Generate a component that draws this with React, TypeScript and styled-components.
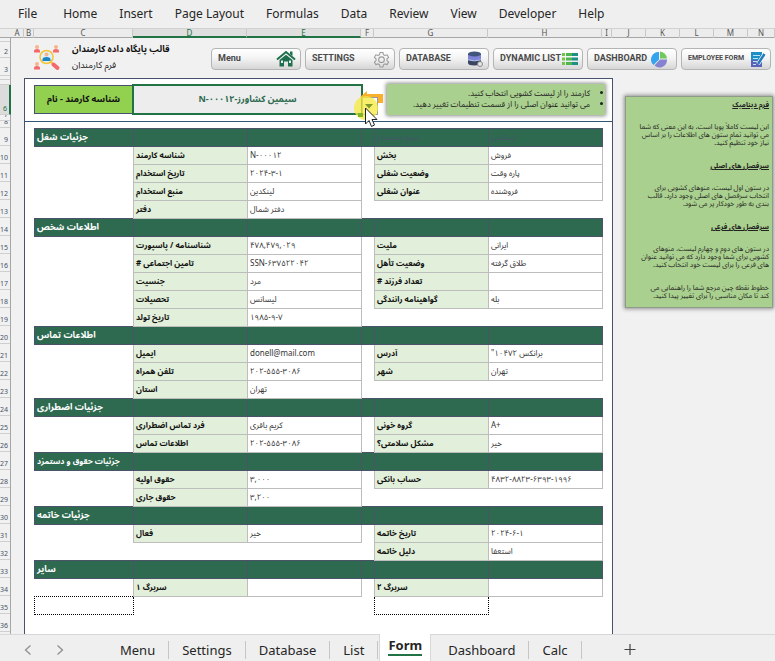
import React from "react";
import styled, { createGlobalStyle, css } from "styled-components";

const GREEN = "#2d6a4f";
const NAVY = "#46526f";
const GRID = "#bdbdbd";
const PERSIAN = '"Noto Sans", "Noto Sans Arabic", "DejaVu Sans", sans-serif';

const Global = createGlobalStyle`
  * { box-sizing: border-box; }
  body { margin: 0; background: #f1f1f1; font-family: "Noto Sans", "DejaVu Sans", sans-serif; color: #262626; }
  button, select { font: inherit; color: inherit; margin: 0; }
`;

const Workbook = styled.div`
  display: flex;
  flex-direction: column;
  height: 100vh;
  overflow: hidden;
`;

/* ---------- menu bar ---------- */
const MenuBar = styled.nav`
  display: flex;
  flex: none;
  height: 28px;
  padding-left: 18px;
  gap: 22px;
  align-items: center;
  background: #efefef;
`;
const MenuItem = styled.button<{ $first?: boolean }>`
  border: 0;
  background: none;
  padding: 0;
  font-size: 12px;
  line-height: 18px;
  white-space: nowrap;
  margin-right: ${(p) => (p.$first ? "4px" : "0")};
`;

/* ---------- sheet frame ---------- */
const HeadRow = styled.div`
  display: grid;
  grid-template-columns: 11px 13fr 10fr 99fr 114fr 114fr 13fr 114fr 114fr 10fr 34fr 34fr 34fr 34fr 27fr;
  flex: none;
  height: 10px;
  background: #ececec;
  border-top: 1px solid #d2d2d2;
  border-bottom: 1px solid #a6a6a6;
`;
const ColHead = styled.div<{ $on?: boolean }>`
  min-width: 0;
  height: 9px;
  border-right: 1px solid #c8c8c8;
  font-size: 8px;
  line-height: 8px;
  text-align: center;
  color: ${(p) => (p.$on ? "#217346" : "#555")};
  ${(p) =>
    p.$on &&
    css`
      background: #dfdfdf;
      border-bottom: 2px solid #217346;
    `}
`;
const Sheet = styled.div`
  display: flex;
  flex: 1;
  min-height: 0;
  overflow: hidden;
`;
const Gutter = styled.div`
  flex: none;
  width: 11px;
  background: #f1f1f1;
  border-right: 1px solid #a6a6a6;
`;
const RowHead = styled.div<{ $h: number; $on?: boolean }>`
  display: flex;
  align-items: flex-end;
  justify-content: flex-end;
  height: ${(p) => p.$h}px;
  overflow: hidden;
  padding-right: 2px;
  border-bottom: 1px solid #cfcfcf;
  font-size: 7px;
  line-height: 10px;
  color: #44546a;
  ${(p) =>
    p.$on &&
    css`
      background: #dcdcdc;
      border-right: 2px solid #217346;
      margin-right: -1px;
      color: #217346;
    `}
`;
const Canvas = styled.div`
  flex: 1;
  min-width: 0;
  display: flex;
  flex-direction: column;
`;

/* ---------- heading ---------- */
const Heading = styled.header`
  display: flex;
  flex: none;
  height: 40px;
  padding: 6px 4px 0 22px;
  align-items: flex-start;
`;
const Titles = styled.div`
  flex: 1;
  padding-left: 11px;
  color: #111;
  font-family: ${PERSIAN};
`;
const Title = styled.h1`
  margin: 0;
  font-size: 9px;
  line-height: 10px;
  white-space: nowrap;
  width: max-content;
`;
const Subtitle = styled.p`
  margin: 6px 0 0;
  font-size: 9px;
  line-height: 10px;
  white-space: nowrap;
  width: max-content;
`;
const Shortcuts = styled.div`
  display: flex;
  gap: 4px;
  padding-top: 4px;
`;
const Shortcut = styled.button<{ $small?: boolean }>`
  display: flex;
  width: 90px;
  height: 22px;
  padding: 0 4px 0 6px;
  align-items: center;
  justify-content: space-between;
  border: 1px solid #b4b4b4;
  border-radius: 4px;
  background: linear-gradient(#fff, #f4f4f4 45%, #d6d6d6);
  font-family: Roboto, "Liberation Sans", sans-serif;
  font-weight: 700;
  font-size: ${(p) => (p.$small ? "7px" : "9px")};
  color: #4a4a4a;
  white-space: nowrap;
  svg { flex: none; }
  span { padding-bottom: 2px; }
`;

/* ---------- form panel ---------- */
const Columns = styled.div`
  display: grid;
  flex: 1;
  grid-template-columns: minmax(0, 589fr) minmax(0, 162fr);
  min-height: 0;
  padding-left: 13px;
`;
const Panel = styled.main`
  background: #fff;
  border: 1px solid ${NAVY};
  border-bottom: 0;
  min-height: 0;
`;
const PickRow = styled.div`
  display: grid;
  grid-template-columns: 98fr 231fr 24fr 218fr;
  height: 43px;
  padding: 5px 7px 6px 9px;
  border-bottom: 1px solid #2f5577;
`;
const PickLabel = styled.label`
  display: flex;
  align-items: center;
  justify-content: center;
  margin: 1px 0;
  padding-bottom: 2px;
  background: #92d050;
  border: 1px solid ${NAVY};
  border-right: 0;
  font: 700 9px/14px ${PERSIAN};
  color: #111;
`;
const PickCell = styled.div`
  position: relative;
  border: 2px solid #217346;
  background: #ededed;
`;
const Picker = styled.select`
  appearance: none;
  display: block;
  width: 100%;
  height: 100%;
  border: 0;
  padding: 0 0 2px;
  outline: 0;
  background: transparent;
  text-align: center;
  text-align-last: center;
  font: 700 9px/14px ${PERSIAN};
  color: ${GREEN};
`;
const Pointer = styled.svg`
  position: absolute;
  right: -24px;
  top: 2px;
  pointer-events: none;
`;
const Tips = styled.ul`
  grid-column: 4;
  margin: 0;
  padding: 3px 15px 0 0;
  background: #a9d08e;
  box-shadow: 0 0 4px 1px #8c8c8c;
  font: 8px/11px ${PERSIAN};
  color: #222;
  white-space: nowrap;
`;

const FormWrap = styled.div`
  padding: 6px 9px 0;
`;
const Table = styled.table`
  width: 100%;
  table-layout: fixed;
  border-collapse: collapse;
  font-family: ${PERSIAN};
  tr { height: 18px; }
  td, th {
    height: 18px;
    padding: 0 2px 2px;
    overflow: hidden;
    text-align: left;
    white-space: nowrap;
    font-size: 8px;
    line-height: 14px;
  }
`;
const SectionCell = styled.th<{ $small?: boolean }>`
  && {
    background: ${GREEN};
    border: 1px solid #4b5369;
    color: #fff;
    overflow: visible;
    font-size: ${(p) => (p.$small ? "8px" : "9px")};
  }
`;
const GhostCell = styled(SectionCell)`
  && {
    color: #46566a;
    font-size: 8px;
    font-weight: 400;
  }
`;
const LabelCell = styled.th`
  background: #e2efda;
  border: 1px solid ${GRID};
  font-weight: 700;
  color: #111;
`;
const ValueCell = styled.td`
  border: 1px solid ${GRID};
  color: #333;
`;
const BlankCell = styled.td<{ $edge?: boolean }>`
  border-left: ${(p) => (p.$edge ? `1px solid ${GRID}` : "0")};
`;
const DottedCell = styled.td`
  border: 1px dotted #000;
`;

/* ---------- side note ---------- */
const Aside = styled.aside`
  padding: 18px 2px 0 12px;
`;
const Note = styled.div`
  background: #a9d08e;
  border: 1px solid #8f9b88;
  box-shadow: 0 0 4px 1px #909090;
  padding: 4px 3px 7px;
  font: 7px/8px ${PERSIAN};
  color: #222;
  white-space: nowrap;
  h2 { margin: 0; font-size: 7px; line-height: 8px; text-decoration: underline; }
  p { margin: 14px 0 15px; line-height: 8px; }
  p:last-child { margin-bottom: 0; }
`;

/* ---------- sheet tabs ---------- */
const TabBar = styled.nav`
  display: flex;
  flex: none;
  height: 27px;
  align-items: flex-start;
  background: #efefef;
  border-top: 1px solid #d8d8d8;
`;
const Arrows = styled.div`
  display: flex;
  gap: 20px;
  padding: 8px 41px 0 22px;
`;
const IconButton = styled.button`
  display: flex;
  border: 0;
  padding: 0;
  background: none;
`;
const Tab = styled.button`
  position: relative;
  border: 0;
  background: none;
  padding: 6px 14px 0 13px;
  font-size: 13px;
  line-height: 18px;
  &::after {
    content: "";
    position: absolute;
    right: 0;
    top: 6px;
    height: 18px;
    border-right: 1px solid #c6c6c6;
  }
`;
const ActiveTab = styled.button`
  align-self: stretch;
  margin: -1px 4px 0 1px;
  padding: 0 8px 2px;
  border: 1px solid #d8d8d8;
  border-top: 0;
  border-bottom: 0;
  background: #fff;
  font-weight: 700;
  font-size: 13px;
  line-height: 17px;
  span { display: block; border-bottom: 2px solid #217346; }
`;
const AddButton = styled(IconButton)`
  padding: 8px 0 0 41px;
`;

/* ---------- icons ---------- */
const Person = ({ x, y }: { x: number; y: number }) => (
  <g transform={`translate(${x} ${y})`}>
    <circle cx="3" cy="2" r="2" fill="#f6b58b" />
    <path d="M0 7.500V6Q0 4 3 4Q6 4 6 6V7.500Z" fill="#f4696b" />
  </g>
);
const Logo = () => (
  <svg width="28" height="28" viewBox="0 0 28 28" aria-hidden="true">
    <Person x={1} y={1} />
    <Person x={20} y={1} />
    <Person x={1} y={18} />
    <path d="M18 18L20 20" stroke="#f7c331" strokeWidth="2" />
    <path d="M20.500 20.500L24.500 24" stroke="#f4696b" strokeWidth="4" strokeLinecap="round" />
    <circle cx="13.500" cy="13" r="6.500" fill="#dff1fb" stroke="#f7c331" strokeWidth="1.500" />
    <circle cx="13.500" cy="10.500" r="2" fill="#f6b58b" />
    <path d="M9.500 17V15Q10 13 13.500 13Q17 13 17.500 15V17Z" fill="#1b86c4" />
  </svg>
);
const HomeIcon = () => (
  <svg width="20" height="18" viewBox="0 0 20 18" aria-hidden="true">
    <path d="M1 9.500L10 2L19 9.500" fill="none" stroke="#1f6e4d" strokeWidth="2" />
    <path d="M14 1.500H16.500V6L14 4Z" fill="#1f6e4d" />
    <path d="M3.500 10L10 4.800L16.500 10V16.500H12V11.500H8V16.500H3.500Z" fill="#1f6e4d" />
    <path d="M5 10.500H7V13H5ZM13 10.500H15V13H13Z" fill="#e8f2ec" />
  </svg>
);
const GearIcon = () => (
  <svg width="17" height="17" viewBox="0 0 24 24" fill="none" stroke="#9a9a9a" strokeWidth="1.500" aria-hidden="true">
    <path d="M10 2h4l.7 3.100 2.300 1.300 3-1 2 3.500-2.300 2.100v2.600l2.300 2.100-2 3.500-3-1-2.300 1.300L14 22.600h-4l-.7-3.100L7 18.200l-3 1-2-3.500 2.300-2.100v-2.600L2 8.900l2-3.500 3 1 2.300-1.300z" />
    <circle cx="12" cy="12.300" r="4" />
  </svg>
);
const DatabaseIcon = () => (
  <svg width="18" height="18" viewBox="0 0 18 18" aria-hidden="true">
    <path d="M2 4V13Q2 15.500 8.500 15.500Q15 15.500 15 13V4Z" fill="#3a4560" />
    <path d="M2 5V9.500Q8 12 15 9.500V5Z" fill="#7f83d8" />
    <ellipse cx="8.500" cy="4" rx="6.500" ry="2.500" fill="#3f557c" />
    <path d="M2 9.800Q8 12 15 9.800" stroke="#b8c8f0" fill="none" />
    <circle cx="14" cy="14" r="2.500" fill="#e4e4e4" stroke="#777" strokeWidth=".8" />
  </svg>
);
const ListIcon = () => (
  <svg width="16" height="14" viewBox="0 0 16 14" aria-hidden="true">
    <path d="M0 1H3V4H0ZM0 5.500H3V8.500H0ZM0 10H3V13H0Z" fill="#72c443" />
    <path d="M4 1H10V4H4ZM4 5.500H10V8.500H4ZM4 10H10V13H4Z" fill="#4fb552" />
    <path d="M10 1H16V4H10ZM10 5.500H16V8.500H10ZM10 10H16V13H10Z" fill="#1d8f86" />
  </svg>
);
const PieIcon = () => (
  <svg width="21" height="17" viewBox="0 0 21 17" aria-hidden="true">
    <path d="M8 8.500L2.500 14A7.500 7.500 0 0 1 8 1Z" fill="#35a4ee" />
    <path d="M9 7.500V.5A7.500 7.500 0 0 1 16 7.500Z" fill="#72c858" />
    <path d="M9 8.500H16A7.500 7.500 0 0 1 3.500 14.500Z" fill="#8583d1" />
  </svg>
);
const FormIcon = () => (
  <svg width="16" height="17" viewBox="0 0 16 17" aria-hidden="true">
    <path d="M1 1H12V16H1Z" fill="#1d8fc4" />
    <path d="M1 9H12V16H1Z" fill="#5b63b8" />
    <path d="M3 4.500H10M3 7.500H8M3 10.500H7M3 13.500H6" stroke="#b9e2f6" />
    <path d="M14.500 3L8 13" stroke="#fff" strokeWidth="4" />
    <path d="M14.500 3L8 13" stroke="#2579bd" strokeWidth="2.500" />
  </svg>
);
const Chevron = ({ flip }: { flip?: boolean }) => (
  <svg width="12" height="14" viewBox="0 0 12 14" fill="none" stroke="#909090" strokeWidth="1.300" aria-hidden="true">
    <path d={flip ? "M3.500 2.500L8.500 7L3.500 11.500" : "M8.500 2.500L3.500 7L8.500 11.500"} />
  </svg>
);

/* ---------- data ---------- */
const menu = ["File", "Home", "Insert", "Page Layout", "Formulas", "Data", "Review", "View", "Developer", "Help"];
const columnNames = "ABCDEFGHIJKLMN".split("");
const topRows = [4, 16, 18, 4, 5, 30, 6, 7];
const rowHeights = [...topRows, ...Array<number>(28).fill(18)];

type Pair = [string, string] | null;
type Section = { title: string; small?: boolean; ghost?: [string, string]; rows: [Pair, Pair][] };
const sections: Section[] = [
  {
    title: "جزئیات شغل",
    ghost: ["منبع استخدام", "لینکدین"],
    rows: [
      [["شناسه کارمند", "N-۰۰۰۱۲"], ["بخش", "فروش"]],
      [["تاریخ استخدام", "۲۰۲۴-۳-۱"], ["وضعیت شغلی", "پاره وقت"]],
      [["منبع استخدام", "لینکدین"], ["عنوان شغلی", "فروشنده"]],
      [["دفتر", "دفتر شمال"], null],
    ],
  },
  {
    title: "اطلاعات شخص",
    rows: [
      [["شناسنامه / پاسپورت", "۴۷۸,۴۷۹,۰۲۹"], ["ملیت", "ایرانی"]],
      [["تامین اجتماعی #", "SSN-۶۳۷۵۲۲۰۴۲"], ["وضعیت تأهل", "طلاق گرفته"]],
      [["جنسیت", "مرد"], ["تعداد فرزند #", ""]],
      [["تحصیلات", "لیسانس"], ["گواهینامه رانندگی", "بله"]],
      [["تاریخ تولد", "۱۹۸۵-۹-۷"], null],
    ],
  },
  {
    title: "اطلاعات تماس",
    rows: [
      [["ایمیل", "donell@mail.com"], ["آدرس", "برانکس ۱۰۴۷۲\""]],
      [["تلفن همراه", "۲۰۲-۵۵۵-۳۰۸۶"], ["شهر", "تهران"]],
      [["استان", "تهران"], null],
    ],
  },
  {
    title: "جزئیات اضطراری",
    rows: [
      [["فرد تماس اضطراری", "کریم باقری"], ["گروه خونی", "A+"]],
      [["اطلاعات تماس", "۲۰۲-۵۵۵-۳۰۸۶"], ["مشکل سلامتی؟", "خیر"]],
    ],
  },
  {
    title: "جزئیات حقوق و دستمزد",
    small: true,
    rows: [
      [["حقوق اولیه", "۳,۰۰۰"], ["حساب بانکی", "۴۸۳۲-۸۸۲۳-۶۳۹۳-۱۹۹۶"]],
      [["حقوق جاری", "۳,۲۰۰"], null],
    ],
  },
  {
    title: "جزئیات خاتمه",
    rows: [
      [["فعال", "خیر"], ["تاریخ خاتمه", "۲۰۲۴-۶-۱"]],
      [null, ["دلیل خاتمه", "استعفا"]],
    ],
  },
  { title: "سایر", rows: [[["سربرگ ۱", ""], ["سربرگ ۲", ""]]] },
];

const dirOf = (text: string) => (/[\u0621-\u06cc]/.test(text) ? "rtl" : "ltr");

const PairCells = ({ pair }: { pair: Pair }) =>
  pair ? (
    <>
      <LabelCell scope="row" dir="rtl">{pair[0]}</LabelCell>
      <ValueCell dir={dirOf(pair[1])}>{pair[1]}</ValueCell>
    </>
  ) : (
    <BlankCell colSpan={2} />
  );

const FormTable = () => (
  <Table>
    <colgroup>
      {[99, 114, 114, 13, 114, 114].map((w, i) => (
        <col key={i} style={{ width: `${(w / 568) * 100}%` }} />
      ))}
    </colgroup>
    {sections.map((s) => (
      <tbody key={s.title}>
        <tr>
          <SectionCell $small={s.small} scope="rowgroup" dir="rtl">{s.title}</SectionCell>
          <SectionCell as="td" />
          <SectionCell as="td" />
          <SectionCell as="td" />
          <GhostCell as="td" dir="rtl">{s.ghost?.[0]}</GhostCell>
          <GhostCell as="td" dir="rtl">{s.ghost?.[1]}</GhostCell>
        </tr>
        {s.rows.map(([a, b], i) => (
          <tr key={i}>
            <BlankCell />
            <PairCells pair={a} />
            <BlankCell $edge={!!a} />
            <PairCells pair={b} />
          </tr>
        ))}
      </tbody>
    ))}
    <tbody>
      <tr>
        <DottedCell />
        <BlankCell colSpan={3} />
        <DottedCell />
        <BlankCell />
      </tr>
    </tbody>
  </Table>
);

export default function App() {
  return (
    <Workbook>
      <Global />
      <MenuBar>
        {menu.map((m, i) => (
          <MenuItem key={m} $first={i === 0}>{m}</MenuItem>
        ))}
      </MenuBar>
      <HeadRow>
        <div />
        {columnNames.map((c) => (
          <ColHead key={c} $on={c === "D" || c === "E"}>{c}</ColHead>
        ))}
      </HeadRow>
      <Sheet>
        <Gutter>
          {rowHeights.map((h, i) => (
            <RowHead key={i} $h={h} $on={i === 5}>{i === 4 ? "" : i + 1}</RowHead>
          ))}
        </Gutter>
        <Canvas>
          <Heading>
            <Logo />
            <Titles>
              <Title dir="rtl">قالب پایگاه داده کارمندان</Title>
              <Subtitle dir="rtl">فرم کارمندان</Subtitle>
            </Titles>
            <Shortcuts>
              <Shortcut><span>Menu</span><HomeIcon /></Shortcut>
              <Shortcut><span>SETTINGS</span><GearIcon /></Shortcut>
              <Shortcut><span>DATABASE</span><DatabaseIcon /></Shortcut>
              <Shortcut><span>DYNAMIC LIST</span><ListIcon /></Shortcut>
              <Shortcut><span>DASHBOARD</span><PieIcon /></Shortcut>
              <Shortcut $small><span>EMPLOYEE FORM</span><FormIcon /></Shortcut>
            </Shortcuts>
          </Heading>
          <Columns>
            <Panel>
              <PickRow>
                <PickLabel htmlFor="employee" dir="rtl">شناسه کارمند - نام</PickLabel>
                <PickCell>
                  <Picker id="employee" dir="rtl">
                    <option>سیمین کشاورز-N-۰۰۰۱۲</option>
                  </Picker>
                  <Pointer width="32" height="42" viewBox="0 0 32 42" aria-hidden="true">
                    <path d="M7 9L14 3V6H30V15H14V14Z" fill="#fbb02d" />
                    <rect x="9.500" y="9.500" width="15" height="17" fill="#fff" stroke="#9a9a9a" />
                    <circle cx="13" cy="20" r="12" fill="#f6ea3c" fillOpacity=".75" />
                    <rect x="5" y="25" width="5" height="4" fill="#7fb52c" />
                    <path d="M12 16H20L16 20.500Z" fill="#7e9a2a" />
                    <path d="M12.500 20V36L16 32.500L18.500 38.500L21.500 37L19 31.500H24Z" fill="#fff" stroke="#222" />
                  </Pointer>
                </PickCell>
                <Tips dir="rtl">
                  <li>کارمند را از لیست کشویی انتخاب کنید.</li>
                  <li>می توانید عنوان اصلی را از قسمت تنظیمات تغییر دهید.</li>
                </Tips>
              </PickRow>
              <FormWrap>
                <FormTable />
              </FormWrap>
            </Panel>
            <Aside>
              <Note dir="rtl">
                <h2>فرم دینامیک</h2>
                <p>
                  این لیست کاملاً پویا است، به این معنی که شما<br />
                  می توانید تمام ستون های اطلاعات را بر اساس<br />
                  نیاز خود تنظیم کنید.
                </p>
                <h2>سرفصل های اصلی</h2>
                <p>
                  در ستون اول لیست، منوهای کشویی برای<br />
                  انتخاب سرفصل های اصلی وجود دارد. قالب<br />
                  بندی به طور خودکار پر می شود.
                </p>
                <h2>سرفصل های فرعی</h2>
                <p>
                  در ستون های دوم و چهارم لیست، منوهای<br />
                  کشویی برای شما وجود دارد که می توانید عنوان<br />
                  های فرعی را برای لیست خود انتخاب کنید.
                </p>
                <p>
                  خطوط نقطه چین مرجع شما را راهنمایی می<br />
                  کند تا مکان مناسبی را برای تغییر پیدا کنید.
                </p>
              </Note>
            </Aside>
          </Columns>
        </Canvas>
      </Sheet>
      <TabBar>
        <Arrows>
          <IconButton aria-label="Previous sheet"><Chevron /></IconButton>
          <IconButton aria-label="Next sheet"><Chevron flip /></IconButton>
        </Arrows>
        {["Menu", "Settings", "Database", "List"].map((t) => <Tab key={t}>{t}</Tab>)}
        <ActiveTab><span>Form</span></ActiveTab>
        {["Dashboard", "Calc"].map((t) => <Tab key={t}>{t}</Tab>)}
        <AddButton aria-label="New sheet">
          <svg width="14" height="14" viewBox="0 0 14 14" stroke="#444" strokeWidth="1.200" aria-hidden="true">
            <path d="M1.500 6.500H12.500M7 1V12" />
          </svg>
        </AddButton>
      </TabBar>
    </Workbook>
  );
}
